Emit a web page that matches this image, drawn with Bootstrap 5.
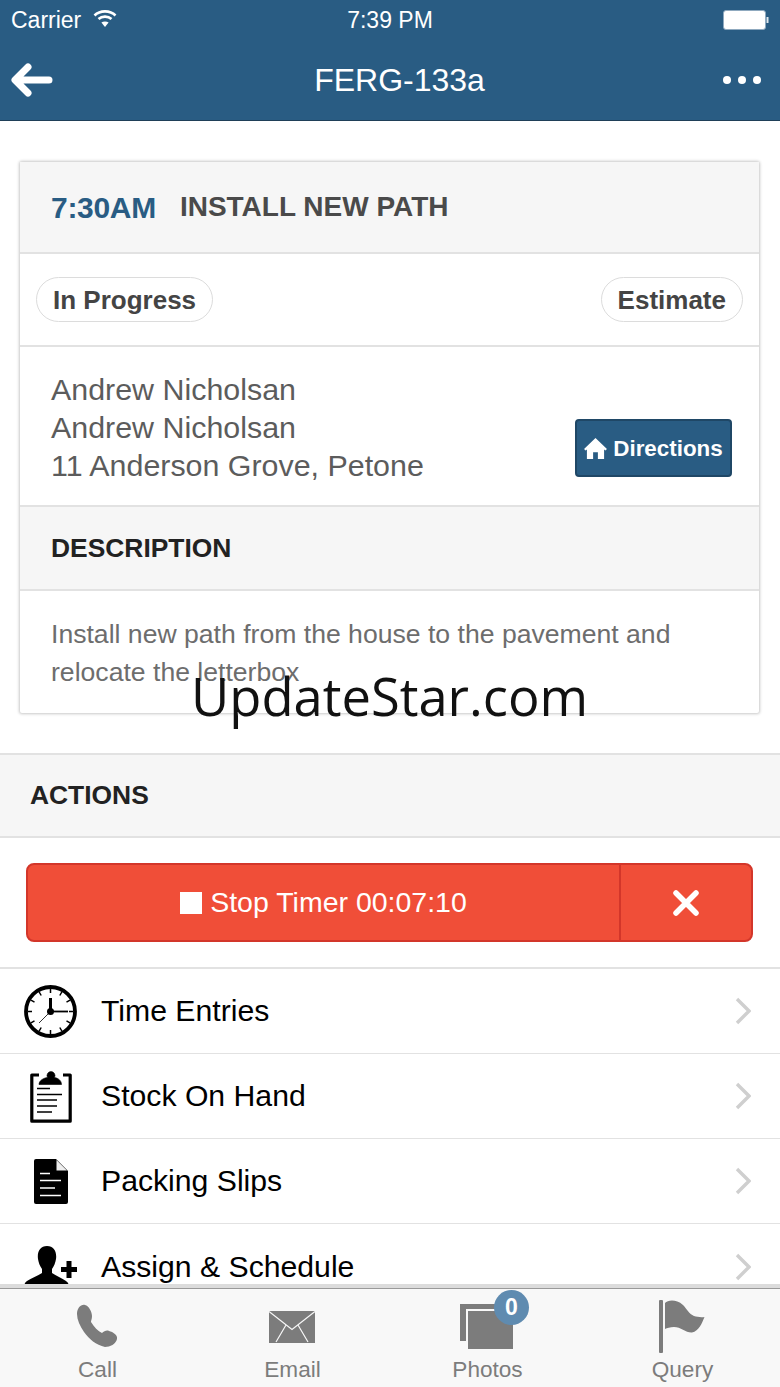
<!DOCTYPE html>
<html lang="en">
<head>
  <meta charset="UTF-8" />
  <meta name="viewport" content="width=device-width, initial-scale=1" />
  <title>FERG-133a</title>
  <link href="https://cdn.jsdelivr.net/npm/bootstrap@5.3.0/dist/css/bootstrap.min.css" rel="stylesheet" />
  <style>
    html, body { height: 100%; }
    body {
      font-family: "Liberation Sans", Arial, sans-serif;
      color: #000;
      background: #fff;
      overflow: hidden;
    }
    .app-shell { height: 1387px; position: relative; }
    .app-top { background: #295c83; color: #fff; height: 121px; border-bottom: 1px solid #1f3f58; flex: none; }
    .status-line { height: 40px; padding: 0 11px; font-size: 23px; position: relative; }
    .status-time { position: absolute; left: 0; right: 0; top: 7px; text-align: center; line-height: 26px; }
    .title-line { height: 80px; padding: 0 11px; position: relative; }
    .title-text { position: absolute; left: 0; right: 0; top: 21px; text-align: center; font-size: 32px; line-height: 38px; padding-left: 19px; }
    .app-main { flex: 1 1 auto; overflow: hidden; min-height: 0; }
    .job-card {
      margin: 41px 20px 40px 20px;
      width: 739px;
      border: 0;
      border-radius: 2px;
      box-shadow: 0 0 3px 1px rgba(0,0,0,.22);
    }
    .job-head { height: 92px; background: #f6f6f6; border-bottom: 2px solid #e2e2e2; padding: 0 31px; }
    .job-time { color: #295c83; font-size: 30px; font-weight: 700; margin-right: 24px; letter-spacing: -.3px; }
    .job-name { color: #4a4a4a; font-size: 28px; font-weight: 700; }
    .job-tags { height: 93px; border-bottom: 2px solid #e2e2e2; padding: 0 16px; }
    .tag-pill { border: 1.5px solid #dcdcdc; border-radius: 23px; height: 45px; line-height: 44px; padding: 0 16px; font-size: 26px; font-weight: 700; color: #444; }
    .job-contact { height: 160px; border-bottom: 2px solid #e2e2e2; padding: 23px 27px 0 31px; font-size: 30.4px; line-height: 38px; color: #5c5c5c; }
    .btn-directions {
      background: #295c83; border: 2px solid #1f4766; color: #fff; width: 157px; height: 58px;
      font-size: 22.4px; font-weight: 700; padding: 1px 0 0; border-radius: 4px; margin-top: 49px; white-space: nowrap; gap: 6px;
    }
    .job-deschead { height: 84px; background: #f6f6f6; border-bottom: 2px solid #e2e2e2; padding: 1px 31px 0; font-size: 26.4px; font-weight: 700; color: #222; }
    .job-desc { height: 122px; padding: 24px 31px 0; font-size: 26.6px; line-height: 38px; color: #6d6d6d; }
    .actions-head { height: 85px; background: #f6f6f6; border-top: 2px solid #e2e2e2; border-bottom: 2px solid #e2e2e2; padding: 0 30px; font-size: 26.4px; font-weight: 700; color: #222; }
    .timer-wrap { height: 129px; padding: 25px 27px 0 26px; }
    .timer-group { height: 79px; border: 2px solid #d3362a; border-radius: 8px; background: #f04e38; color: #fff; overflow: hidden; }
    .timer-main { flex: 1 1 auto; font-size: 28.5px; border-right: 2px solid #d3362a; }
    .timer-sq { width: 22px; height: 22px; background: #fff; display: inline-block; margin-right: 8px; }
    .timer-x { width: 130px; flex: none; }
    .act-list { border-top: 2px solid #e2e2e2; }
    .act-item { height: 85px; border: 0; border-bottom: 2px solid #e2e2e2; border-radius: 0; padding: 0 29px 0 0; font-size: 30.2px; color: #000; }
    .act-icon { width: 101px; flex: none; display: flex; justify-content: center; }
    .app-foot { height: 103px; flex: none; background: #f8f8f8; border-top: 4px solid #dcdcdc; box-shadow: inset 0 1px 0 #9a9a9a; }
    .foot-tab { flex: 1 1 0; color: #7c7c7c; font-size: 22.6px; height: 99px; position: relative; text-align: center; }
    .foot-tab svg { position: absolute; }
    .foot-label { position: absolute; left: 0; right: 0; top: 67px; line-height: 30px; }
    .photo-count {
      position: absolute; left: 104px; top: 2px; width: 35px; height: 35px; border-radius: 50%;
      background: #5f8bb0; color: #fff; font-size: 23px; font-weight: 700; line-height: 34px;
    }
    .stamp-text {
      position: absolute; left: 191px; top: 659px; font-family: "Open Sans", sans-serif; font-size: 52.5px;
      line-height: 74px; color: #111; white-space: nowrap; pointer-events: none;
    }
  </style>
</head>
<body>
  <div class="app-shell d-flex flex-column">
    <header class="app-top">
      <div class="status-line d-flex align-items-center justify-content-between">
        <div class="d-flex align-items-center gap-2">
          <span>Carrier</span>
          <svg class="ms-1 mb-1" width="24" height="18" viewBox="0 0 24 18" fill="none" stroke="#fff" stroke-width="2.6">
            <path d="M1.5 6.5C7 1 17 1 22.5 6.5" />
            <path d="M5.5 10C9 6.8 15 6.8 18.5 10" />
            <path d="M12 18l-3.6-4.4c2-1.4 5.2-1.4 7.2 0z" fill="#fff" stroke="none" />
          </svg>
        </div>
        <div class="status-time">7:39 PM</div>
        <svg width="46" height="20" viewBox="0 0 46 20">
          <rect x="0.5" y="0.5" width="42" height="19" rx="2.5" fill="#fff" stroke="#8fa9bf" />
          <rect x="43.5" y="7" width="2" height="6" fill="#dfe7ee" />
        </svg>
      </div>
      <div class="title-line d-flex align-items-center justify-content-between">
        <svg width="42" height="34" viewBox="0 0 42 34" fill="none" stroke="#fff" stroke-width="7" stroke-linecap="round" stroke-linejoin="round">
          <path d="M38 17H6M17 4L4 17l13 13" />
        </svg>
        <div class="title-text">FERG-133a</div>
        <svg width="38" height="8" viewBox="0 0 38 8" fill="#fff" class="me-2">
          <circle cx="4" cy="4" r="4" /><circle cx="19" cy="4" r="4" /><circle cx="34" cy="4" r="4" />
        </svg>
      </div>
    </header>

    <main class="app-main">
      <div class="card job-card">
        <div class="job-head d-flex align-items-center">
          <span class="job-time">7:30AM</span>
          <span class="job-name">INSTALL NEW PATH</span>
        </div>
        <div class="job-tags d-flex align-items-center justify-content-between">
          <span class="tag-pill">In Progress</span>
          <span class="tag-pill">Estimate</span>
        </div>
        <div class="job-contact d-flex justify-content-between">
          <div>Andrew Nicholsan<br />Andrew Nicholsan<br />11 Anderson Grove, Petone</div>
          <button class="btn btn-directions d-flex align-items-center justify-content-center">
            <svg width="23" height="21" viewBox="0 0 24 22" fill="#fff">
              <path d="M12 0L24 11.5l-1.6 1.7L21 12v10h-6.5v-7h-5v7H3V12l-1.4 1.2L0 11.5z" />
            </svg>
            Directions
          </button>
        </div>
        <div class="job-deschead d-flex align-items-center">DESCRIPTION</div>
        <div class="job-desc">Install new path from the house to the pavement and relocate the letterbox</div>
      </div>

      <div class="actions-head d-flex align-items-center">ACTIONS</div>
      <div class="timer-wrap">
        <div class="timer-group d-flex">
          <div class="timer-main d-flex align-items-center justify-content-center"><span class="timer-sq"></span>Stop Timer 00:07:10</div>
          <div class="timer-x d-flex align-items-center justify-content-center">
            <svg width="26" height="26" viewBox="0 0 26 26" stroke="#fff" stroke-width="5.5" stroke-linecap="round"><path d="M3 3l20 20M23 3L3 23" /></svg>
          </div>
        </div>
      </div>

      <div class="list-group list-group-flush act-list">
        <a class="list-group-item act-item d-flex align-items-center">
          <span class="act-icon">
            <svg width="53" height="53" viewBox="0 0 53 53" fill="none" stroke="#000">
              <circle cx="26.500" cy="26.500" r="24.500" stroke-width="3.800" />
              <path d="M26.500 4v4M26.500 45v4M4 26.500h4M45 26.500h4M15.200 7l2 3.500M37.800 7l-2 3.500M7 15.200l3.500 2M46 15.200l-3.500 2M7 37.800l3.500-2M46 37.800l-3.500-2M15.200 46l2-3.500M37.800 46l-2-3.500" stroke-width="1.500" />
              <path d="M26.500 13v13.500" stroke-width="3" />
              <path d="M26.500 26.500H44" stroke-width="1.800" />
              <path d="M26.500 26.500L15 38" stroke-width=".8" />
              <circle cx="26.500" cy="26.500" r="3.500" fill="#000" stroke="none" />
            </svg>
          </span>
          <span class="flex-grow-1">Time Entries</span>
          <svg width="16" height="28" viewBox="0 0 16 28" fill="none" stroke="#cfcfcf" stroke-width="3.4"><path d="M2 2l12 12L2 26" /></svg>
        </a>
        <a class="list-group-item act-item d-flex align-items-center">
          <span class="act-icon">
            <svg width="42" height="54" viewBox="0 0 42 54" fill="none" stroke="#000">
              <path d="M9 6H1.800v46.200h38.400V6H33" stroke-width="3.200" stroke-linejoin="round" />
              <path d="M9 15.500h22.500c0-4-3.500-6.500-7-7a4 4 0 1 0-7 0c-4 .5-8.500 3-8.500 7z" fill="#000" stroke-width=".6" />
              <path d="M7 19.500h13M7 25.500h25M7 31h20M7 37h20M7 43h15" stroke-width="1.600" />
            </svg>
          </span>
          <span class="flex-grow-1">Stock On Hand</span>
          <svg width="16" height="28" viewBox="0 0 16 28" fill="none" stroke="#cfcfcf" stroke-width="3.4"><path d="M2 2l12 12L2 26" /></svg>
        </a>
        <a class="list-group-item act-item d-flex align-items-center">
          <span class="act-icon">
            <svg width="34" height="45" viewBox="0 0 34 45">
              <path d="M2 0h20l12 12v31a2 2 0 0 1-2 2H2a2 2 0 0 1-2-2V2a2 2 0 0 1 2-2z" fill="#000" />
              <path d="M22.500 1L33 11.500H22.500z" fill="#eee" />
              <path d="M6 14.500h10M6 21.500h21M6 29h15M6 36.500h21" stroke="#fff" stroke-width="1.600" />
            </svg>
          </span>
          <span class="flex-grow-1">Packing Slips</span>
          <svg width="16" height="28" viewBox="0 0 16 28" fill="none" stroke="#cfcfcf" stroke-width="3.4"><path d="M2 2l12 12L2 26" /></svg>
        </a>
        <a class="list-group-item act-item d-flex align-items-center">
          <span class="act-icon">
            <svg width="53" height="42" viewBox="0 0 53 42" fill="#000">
              <path d="M23 0c7 0 10 6 9 13-.6 4-2 7-4 10v4c4 3 10 5 14 8 2 1.500 3 3 3 7H0c0-4 1-5.500 3-7 4-3 11-5 15-8v-4c-2-3-3.400-6-4-10-1-7 2-13 9-13z" />
              <path d="M42.500 15h5v6H53v5h-5.500v6h-5v-6H37v-5h5.500z" />
            </svg>
          </span>
          <span class="flex-grow-1">Assign &amp; Schedule</span>
          <svg width="16" height="28" viewBox="0 0 16 28" fill="none" stroke="#cfcfcf" stroke-width="3.4"><path d="M2 2l12 12L2 26" /></svg>
        </a>
      </div>
    </main>

    <footer class="app-foot d-flex">
      <div class="foot-tab">
        <svg style="left:76px;top:16px" width="42" height="44" viewBox="0 0 42 44" fill="#7c7c7c">
          <path d="M1 10C1 4 5 0 9 1c4 1 7 7 7 11 0 3-1 4-1 6 3 5 7 9 11 11 2-2 5-3 7-2 4 1 9 4 8 8-1 5-7 8-12 8-9-2-16-8-21-15C4 22 1 16 1 10z" />
        </svg>
        <div class="foot-label">Call</div>
      </div>
      <div class="foot-tab">
        <svg style="left:74px;top:23px" width="46" height="32" viewBox="0 0 46 32">
          <rect width="46" height="32" fill="#7c7c7c" />
          <path d="M0 .500l23 18 23-18M7 31l10-17M39 31L29 14" fill="none" stroke="#f8f8f8" stroke-width="1.200" />
        </svg>
        <div class="foot-label">Email</div>
      </div>
      <div class="foot-tab">
        <svg style="left:70px;top:16px" width="53" height="45" viewBox="0 0 53 45">
          <path d="M0 0h46v5H6v32H0z" fill="#7c7c7c" />
          <rect x="8" y="7" width="45" height="38" fill="#7c7c7c" />
        </svg>
        <span class="photo-count">0</span>
        <div class="foot-label">Photos</div>
      </div>
      <div class="foot-tab">
        <svg style="left:74px;top:12px" width="46" height="53" viewBox="0 0 46 53" fill="#7c7c7c">
          <rect x="0" y="0" width="4" height="53" rx="1" />
          <path d="M6 3c3-3 11-4 18 2 4 4 6 9 11 11 3 1 7 1.500 10.500 1-2.500 6-5.500 14-12.500 15.500-6 .5-11-5.500-18-5.500-4 0-7 1-9 2z" />
        </svg>
        <div class="foot-label">Query</div>
      </div>
    </footer>

    <div class="stamp-text">UpdateStar.com</div>
  </div>

  <script src="https://cdn.jsdelivr.net/npm/bootstrap@5.3.0/dist/js/bootstrap.bundle.min.js"></script>
</body>
</html>
